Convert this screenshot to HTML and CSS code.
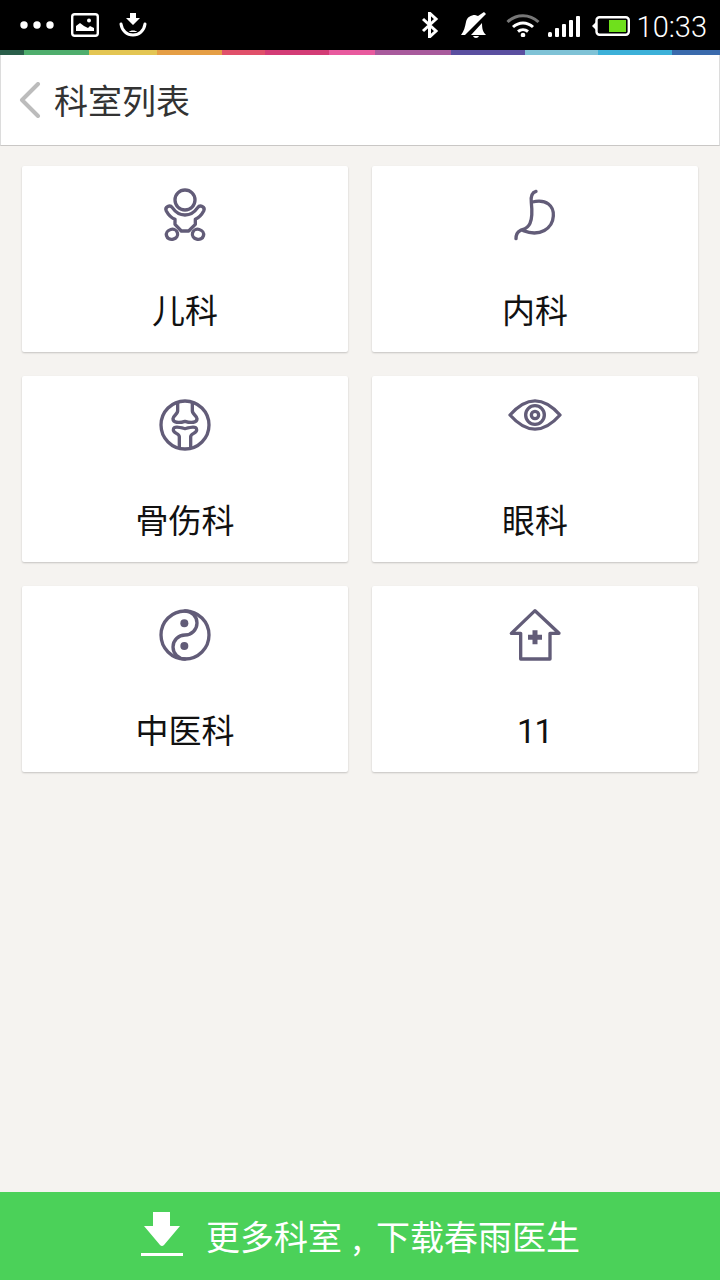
FILE: index.html
```html
<!DOCTYPE html>
<html lang="zh">
<head>
<meta charset="utf-8">
<title>科室列表</title>
<link rel="stylesheet" href="styles.css">
</head>
<body>
<div class="page">
  <div class="status">
    <div class="status-left">
      <svg class="s-dots" viewBox="0 0 34 8"><circle cx="4" cy="4" r="3.7"/><circle cx="17" cy="4" r="3.7"/><circle cx="30" cy="4" r="3.7"/></svg>
      <svg class="s-img" viewBox="0 0 28 24"><rect x="1.2" y="1.2" width="25.6" height="21.6" rx="2.5" class="ln"/><path d="M5 18v-5l4-3 4 3 4 2 2-2 4 2v3z"/><circle cx="18" cy="7.5" r="2"/></svg>
      <svg class="s-dl" viewBox="0 0 28 24"><path d="M11 0h6v5h4l-7 7-7-7h4z"/><path d="M2 11c1 7 6 11 12 11s11-4 12-11" class="ln2"/><path d="M10 19c1-2 7-2 8 0z"/></svg>
    </div>
    <div class="status-right">
      <svg class="s-bt" viewBox="0 0 18 26"><path d="M2 7l13 12-6.500 6V1L15 7 2 19" class="ln3"/></svg>
      <svg class="s-bell" viewBox="0 0 26 26"><path d="M1 23C4 19 5 15 6 10 7 5 11 3 15 3L18 4 24 0 26 2 5 23Z"/><path d="M11 23 22 11C22 17 23 20 26 23Z"/><path d="M13 24H19C18 26.500 14 26.500 13 24Z"/></svg>
      <svg class="s-wifi" viewBox="0 0 34 24"><path d="M1.500 9c9-8.500 22-8.500 31 0" class="arc-dim"/><path d="M7 14c6-5.500 14-5.500 20 0M12 18.500c3-2.500 7-2.500 10 0" class="ln3"/><circle cx="17" cy="22" r="2.300"/></svg>
      <svg class="s-sig" viewBox="0 0 32 21"><rect x="0" y="16" width="4" height="5" rx="1.500"/><rect x="7" y="12" width="4" height="9" rx="1"/><rect x="14" y="8" width="4" height="13" rx="1"/><rect x="21" y="4" width="4" height="17" rx="1"/><rect x="28" y="0" width="4" height="21" rx="1"/></svg>
      <svg class="s-bat" viewBox="0 0 38 20"><path d="M4 6 0 10l4 4z"/><rect x="4.500" y="1.200" width="32.300" height="17.600" rx="3" class="ln"/><rect x="17" y="4" width="17" height="12" class="charge"/></svg>
      <span class="time">10:33</span>
    </div>
  </div>
  <div class="stripe">
    <i class="c1"></i><i class="c2"></i><i class="c3"></i><i class="c4"></i><i class="c5"></i><i class="c6"></i><i class="c7"></i><i class="c8"></i><i class="c9"></i><i class="c10"></i><i class="c11"></i><i class="c12"></i>
  </div>
  <header class="head">
    <svg class="back" viewBox="0 0 24 36"><path d="M20 2 4 18l16 16"/></svg>
    <h1 class="title">科室列表</h1>
  </header>
  <main class="grid">
    <a class="card">
      <svg class="ico" viewBox="0 0 270 210"><circle cx="135" cy="60" r="30"/><path d="M97 83Q112 105 135 105T173 83C180 73 197 80 191 93 183 108 175 114 166 118V133L146 153H124L105 133V118C95 114 87 108 79 93 73 80 90 73 97 83Z"/><ellipse cx="96" cy="163" rx="17" ry="15" transform="rotate(-15 96 163)"/><ellipse cx="174" cy="163" rx="17" ry="15" transform="rotate(15 174 163)"/></svg>
      <span class="label">儿科</span>
    </a>
    <a class="card">
      <svg class="ico" viewBox="0 0 270 210"><path d="M138 34C124 38 122 52 124 68 127 95 128 112 120 130 112 148 100 147 90 152 82 156 78 164 78 176"/><path d="M127 66C170 56 192 78 190 108 188 145 150 172 100 152"/></svg>
      <span class="label">内科</span>
    </a>
    <a class="card">
      <svg class="ico" viewBox="0 0 270 210"><circle cx="135" cy="105" r="72"/><path d="M113 40V60C115 72 100 76 99 86 99 98 116 100 135 94 154 100 171 98 171 86 170 76 155 72 157 60V40"/><path d="M118 172V140C118 130 100 130 100 120 100 106 120 112 135 116 150 112 170 106 170 120 170 130 152 130 152 140V172"/></svg>
      <span class="label">骨伤科</span>
    </a>
    <a class="card">
      <svg class="ico" viewBox="0 0 270 210"><path d="M60 75Q135-10 210 75 135 160 60 75Z"/><circle cx="135" cy="75" r="28"/><circle cx="135" cy="75" r="11" class="thick"/></svg>
      <span class="label">眼科</span>
    </a>
    <a class="card">
      <svg class="ico" viewBox="0 0 270 210"><circle cx="135" cy="105" r="72"/><path d="M135 33A36 36 0 0 1 135 105 36 36 0 0 0 135 177"/><circle cx="133" cy="70" r="12" class="fill"/><circle cx="133" cy="138" r="12" class="fill"/></svg>
      <span class="label">中医科</span>
    </a>
    <a class="card">
      <svg class="ico" viewBox="0 0 270 210"><path d="M135 32 64 100H92V177H180V100H207Z"/><path d="M114 112H156M135 91V133" class="thick2"/></svg>
      <span class="label num">11</span>
    </a>
  </main>
  <footer class="cta">
    <svg class="dl" viewBox="0 0 42 44"><path d="M12 0H29V14H39L23 33Q21 35 19 33L3 14H12Z"/><rect x="0" y="41" width="42" height="3.500"/></svg>
    <span class="cta-text">更多科室<span class="comma">,</span>下载春雨医生</span>
  </footer>
</div>
</body>
</html>
```
FILE: styles.css
```css
* { box-sizing: border-box; }
html, body { margin: 0; padding: 0; }
body {
  background: #f5f3f0;
  font-family: "Noto Sans CJK SC", "Noto Sans", sans-serif;
}
.page {
  width: 720px;
  height: 1280px;
  display: flex;
  flex-direction: column;
  overflow: hidden;
}

/* status bar */
.status {
  height: 50px;
  background: #000;
  display: flex;
  justify-content: space-between;
  align-items: center;
  padding: 0 13px 0 20px;
  flex: none;
}
.status svg { fill: #fff; display: block; flex: none; }
.status .ln { fill: none; stroke: #fff; stroke-width: 2.4; }
.status .ln2 { fill: none; stroke: #fff; stroke-width: 3; stroke-linecap: round; }
.status .ln3 { fill: none; stroke: #fff; stroke-width: 3; }
.status .arc-dim { fill: none; stroke: #777; stroke-width: 3; }
.status .charge { fill: #6fe01c; }
.status-left, .status-right { display: flex; align-items: center; }
.s-dots { width: 34px; height: 8px; margin-right: 17px; }
.s-img { width: 28px; height: 24px; margin-right: 20px; }
.s-dl { width: 28px; height: 24px; }
.s-bt { width: 18px; height: 26px; margin-right: 21px; }
.s-bell { width: 26px; height: 26px; margin-right: 20px; }
.s-wifi { width: 34px; height: 24px; margin-right: 8px; }
.s-sig { width: 32px; height: 21px; margin-top: 3px; margin-right: 12px; }
.s-bat { width: 38px; height: 20px; margin-top: 2px; margin-right: 7px; }
.time {
  color: #fff;
  font-family: Roboto, "Liberation Sans", sans-serif;
  font-weight: 300;
  font-size: 29px;
  line-height: 50px;
  margin-top: 4px;
}

/* colour stripe */
.stripe { height: 5px; display: flex; flex: none; }
.stripe i { display: block; height: 100%; }
.c1 { width: 24px; background: #2a5f4a; }
.c2 { width: 65px; background: #4fae6d; }
.c3 { width: 68px; background: #e3c553; }
.c4 { width: 65px; background: #e59e45; }
.c5 { width: 43px; background: #e0506a; }
.c6 { width: 64px; background: #d33c76; }
.c7 { width: 46px; background: #e85a9e; }
.c8 { width: 76px; background: #a85a9c; }
.c9 { width: 74px; background: #5a4fa0; }
.c10 { width: 73px; background: #7fc2d6; }
.c11 { width: 74px; background: #3cb0d8; }
.c12 { width: 48px; background: #3a6aac; }

/* header */
.head {
  height: 91px;
  flex: none;
  background: #fff;
  border: 1px solid #dcdcdc;
  border-top: 0;
  border-bottom-color: #c9c7c5;
  display: flex;
  align-items: center;
  padding-left: 17px;
}
.back { width: 24px; height: 36px; margin-right: 12px; flex: none; }
.back path { fill: none; stroke: #bcbcbc; stroke-width: 4; stroke-linecap: round; stroke-linejoin: round; }
.title {
  margin: 0;
  font-size: 34px;
  font-weight: 400;
  line-height: 1;
  color: #333;
}

/* grid */
.grid {
  flex: 1;
  display: grid;
  grid-template-columns: 326px 326px;
  grid-auto-rows: 186px;
  gap: 24px;
  padding: 20px 22px 0;
  align-content: start;
}
.card {
  background: #fff;
  border-radius: 2px;
  box-shadow: 0 1px 2px rgba(0, 0, 0, .2);
  display: flex;
  flex-direction: column;
  align-items: center;
  padding-top: 14px;
}
.ico { width: 90px; height: 70px; flex: none; fill: none; stroke: #625c78; stroke-width: 10; stroke-linecap: round; stroke-linejoin: round; }
.ico .thick { stroke-width: 10; }
.ico .thick2 { stroke-width: 15; stroke-linecap: butt; }
.ico .fill { fill: #625c78; stroke: none; }
.label {
  margin-top: 34px;
  font-size: 33px;
  line-height: 50px;
  color: #111;
}
.num {
  font-family: Roboto, "Noto Sans", sans-serif;
  letter-spacing: -1px;
  padding-top: 3px;
  padding-right: 1px;
}

/* bottom button */
.cta {
  height: 88px;
  flex: none;
  background: #4bd159;
  display: flex;
  align-items: center;
  padding-left: 141px;
}
.dl { width: 42px; height: 44px; margin-right: 23px; margin-bottom: 4px; fill: #fff; flex: none; }
.cta-text {
  color: #fff;
  font-size: 34px;
  line-height: 1;
  white-space: nowrap;
}
.comma { display: inline-block; width: 34px; padding-right: 4px; text-align: center; }
```
